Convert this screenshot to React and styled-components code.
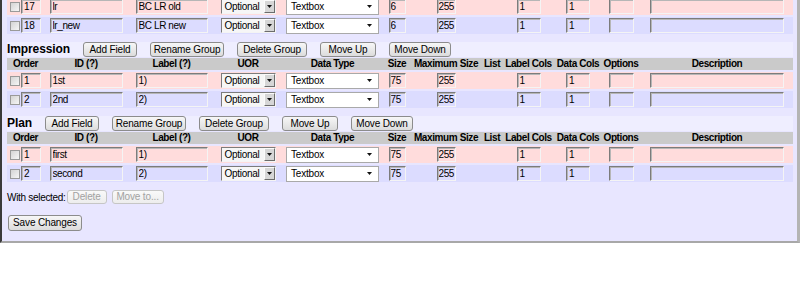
import React from 'react';
import styled, { createGlobalStyle, css } from 'styled-components';

const GlobalStyle = createGlobalStyle`
  html, body { margin: 0; padding: 0; background: #ffffff; }
  body {
    font-family: "Liberation Sans", Arial, sans-serif;
    font-size: 10px;
    color: #000;
  }
`;

const COLS = '37px 84px 87px 66px 103px 26px 72px 20px 53px 46px 40px 152px';

const Panel = styled.div`
  width: 800px;
  box-sizing: border-box;
  background: #e8e6ff;
  border-left: 2px solid #3a3a3a;
  border-right: 3px solid #b4b4b4;
  border-bottom: 2px solid #a8a8a8;
  padding: 0 4px 10px 5px;
  overflow: hidden;
`;

const Group = styled.section`
  display: flex;
  flex-direction: column;
  margin-top: ${(p) => (p.$first ? '-4px' : '6px')};
`;

const Band = styled.div`
  display: flex;
  align-items: center;
  gap: 13px;
  height: 15px;
  margin-top: 2px;
  background: #efeeff;
`;

const GroupTitle = styled.h3`
  margin: 0;
  font-size: 12px;
  font-weight: bold;
  line-height: 15px;
  letter-spacing: -0.1px;
`;

const Btn = styled.button`
  box-sizing: border-box;
  margin: 0;
  width: ${(p) => (p.$w ? `${p.$w}px` : 'auto')};
  height: ${(p) => p.$h || 15}px;
  padding: 0;
  font-family: inherit;
  font-size: 10px;
  line-height: 12px;
  letter-spacing: -0.15px;
  white-space: nowrap;
  color: #000;
  border: 1px solid #8c8c8c;
  border-radius: 3px;
  background: linear-gradient(#f7f7f7, #dcdcdc);
  ${(p) =>
    p.disabled &&
    css`
      color: #a2a2a2;
      border-color: #c6c6c6;
      background: linear-gradient(#f9f9f9, #ededed);
    `}
`;

const HeadRow = styled.div`
  display: grid;
  grid-template-columns: ${COLS};
  height: 12px;
  margin-top: 1px;
  background: #cacaca;
  font-weight: bold;
  font-size: 10px;
  line-height: 12px;
  letter-spacing: -0.4px;
`;

const HeadCell = styled.div`
  text-align: center;
  white-space: nowrap;
`;

const Row = styled.div`
  display: grid;
  grid-template-columns: ${COLS};
  height: 17px;
  margin-top: 2px;
  background: ${(p) => (p.$tone === 'pink' ? '#ffdcdc' : '#dcdcff')};
`;

const Cell = styled.div`
  display: flex;
  align-items: center;
  justify-content: center;
  gap: 1px;
`;

const Check = styled.input.attrs({ type: 'checkbox' })`
  appearance: none;
  box-sizing: border-box;
  width: 10px;
  height: 10px;
  margin: 0;
  border: 1px solid #9a9a9a;
  background: linear-gradient(135deg, #d4d4d4, #f6f6f6);
`;

const TextInput = styled.input.attrs({ type: 'text', readOnly: true })`
  box-sizing: border-box;
  width: ${(p) => p.$w}px;
  height: 15px;
  margin: 0;
  padding: 0 0 0 ${(p) => (p.$tight ? 1 : 2)}px;
  font-family: inherit;
  font-size: 10px;
  letter-spacing: -0.4px;
  color: #000;
  background: transparent;
  border: 1px solid;
  border-color: #7c7c7c #f4f4f4 #f4f4f4 #7c7c7c;
  box-shadow: inset 1px 1px 0 #b6b6b6;
  outline: none;
`;

const UorSelect = styled.div`
  box-sizing: border-box;
  display: inline-flex;
  align-items: stretch;
  width: 55px;
  height: 15px;
  border: 1px solid;
  border-color: #7c7c7c #f4f4f4 #f4f4f4 #7c7c7c;
  background: #f6f6f6;
`;

const UorText = styled.span`
  flex: 1;
  padding-left: 3px;
  line-height: 13px;
  letter-spacing: -0.3px;
`;

const UorButton = styled.span`
  box-sizing: border-box;
  width: 11px;
  display: flex;
  align-items: center;
  justify-content: center;
  background: #d6d6d6;
  border: 1px solid;
  border-color: #fbfbfb #6c6c6c #6c6c6c #fbfbfb;
`;

const TypeSelect = styled.div`
  box-sizing: border-box;
  display: inline-flex;
  align-items: center;
  justify-content: space-between;
  width: 93px;
  height: 16px;
  padding: 0 6px 0 4px;
  background: #ffffff;
  border: 1px solid #a9a9a9;
  letter-spacing: -0.2px;
`;

const Actions = styled.div`
  display: flex;
  align-items: center;
  height: 14px;
  margin-top: 8px;
`;

const ActionLabel = styled.span`
  margin-right: 1px;
  letter-spacing: -0.3px;
`;

const ActionGap = styled.span`
  width: 5px;
`;

const SaveWrap = styled.div`
  margin-top: 11px;
  padding-left: 1px;
`;

const Arrow = () => (
  <svg width="5" height="3" viewBox="0 0 5 3">
    <path d="M0 0H5L2.5 3Z" fill="#111" />
  </svg>
);

const HEADERS = [
  'Order',
  'ID (?)',
  'Label (?)',
  'UOR',
  'Data Type',
  'Size',
  'Maximum Size',
  'List',
  'Label Cols',
  'Data Cols',
  'Options',
  'Description',
];

function FieldRow({ tone, order, id, label, size }) {
  return (
    <Row $tone={tone}>
      <Cell>
        <Check />
        <TextInput $w={20} value={order} />
      </Cell>
      <Cell>
        <TextInput $w={73} value={id} />
      </Cell>
      <Cell>
        <TextInput $w={72} value={label} />
      </Cell>
      <Cell>
        <UorSelect>
          <UorText>Optional</UorText>
          <UorButton>
            <Arrow />
          </UorButton>
        </UorSelect>
      </Cell>
      <Cell>
        <TypeSelect>
          <span>Textbox</span>
          <Arrow />
        </TypeSelect>
      </Cell>
      <Cell>
        <TextInput $w={17} $tight value={size} />
      </Cell>
      <Cell>
        <TextInput $w={19} $tight value="255" />
      </Cell>
      <Cell />
      <Cell>
        <TextInput $w={24} value="1" />
      </Cell>
      <Cell>
        <TextInput $w={24} value="1" />
      </Cell>
      <Cell>
        <TextInput $w={25} value="" />
      </Cell>
      <Cell>
        <TextInput $w={134} value="" />
      </Cell>
    </Row>
  );
}

function GroupBlock({ title, fields }) {
  return (
    <Group>
      <Band>
        <GroupTitle>{title}</GroupTitle>
        <Btn $w={54}>Add Field</Btn>
        <Btn $w={74}>Rename Group</Btn>
        <Btn $w={70}>Delete Group</Btn>
        <Btn $w={56}>Move Up</Btn>
        <Btn $w={62}>Move Down</Btn>
      </Band>
      <HeadRow>
        {HEADERS.map((h) => (
          <HeadCell key={h}>{h}</HeadCell>
        ))}
      </HeadRow>
      {fields.map((f, i) => (
        <FieldRow key={f.id} tone={i % 2 === 0 ? 'pink' : 'blue'} {...f} />
      ))}
    </Group>
  );
}

export default function App() {
  return (
    <>
      <GlobalStyle />
      <Panel>
        <Group $first>
          <FieldRow tone="pink" order="17" id="lr" label="BC LR old" size="6" />
          <FieldRow tone="blue" order="18" id="lr_new" label="BC LR new" size="6" />
        </Group>
        <GroupBlock
          title="Impression"
          fields={[
            { order: '1', id: '1st', label: '1)', size: '75' },
            { order: '2', id: '2nd', label: '2)', size: '75' },
          ]}
        />
        <GroupBlock
          title="Plan"
          fields={[
            { order: '1', id: 'first', label: '1)', size: '75' },
            { order: '2', id: 'second', label: '2)', size: '75' },
          ]}
        />
        <Actions>
          <ActionLabel>With selected:</ActionLabel>
          <Btn disabled $h={14} $w={40}>Delete</Btn>
          <ActionGap />
          <Btn disabled $h={14} $w={52}>Move to...</Btn>
        </Actions>
        <SaveWrap>
          <Btn $h={16} $w={74}>Save Changes</Btn>
        </SaveWrap>
      </Panel>
    </>
  );
}
